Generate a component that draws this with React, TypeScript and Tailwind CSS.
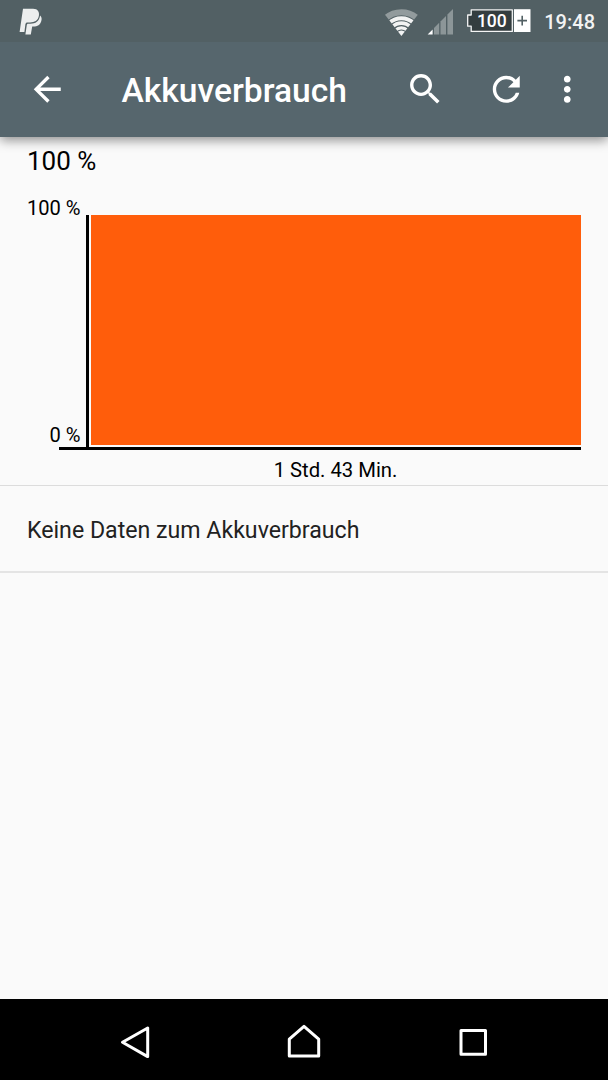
import type { ReactNode } from 'react';

const ActionIcon = ({ label, children }: { label: string; children: ReactNode }) => (
  <button aria-label={label} className="h-[40.5px] w-[40.5px] shrink-0">
    <svg viewBox="0 0 24 24" className="h-full w-full" fill="#fff">
      {children}
    </svg>
  </button>
);

const StatusBar = () => (
  <div className="relative z-10 flex h-[42px] shrink-0 items-center bg-[#526064] pl-[19px] pr-[13px]">
    <svg width="24" height="42" viewBox="19 0 24 42" fill="#eceeee">
      <path d="M23 8.7H33C38 8.7 39.6 12.2 38.9 15.8C38 20.8 34.5 22.4 30 22.4H27.5C26.2 22.4 25.7 23 25.4 24.3L24.4 32H19.6Z" />
      <path d="M40.1 15.5C41.8 17 41.9 19 41.3 21C40.3 24.8 37.5 26.6 33.5 26.6H32.2L30.8 34.5H25.4L26.8 25C27 24 27.5 23.7 28.3 23.7H30.5C35.5 23.7 39.2 21.5 40.1 15.5Z" />
    </svg>
    <div className="ml-auto flex items-center">
      <svg width="34" height="42" viewBox="384 0 34 42">
        <clipPath id="wifi">
          <path d="M401.4 36L384.8 14.6V5H418V14.6Z" />
        </clipPath>
        <g clipPath="url(#wifi)" fill="none" stroke="#f2f3f3">
          <circle cx="401.4" cy="36" r="23.8" stroke="#929b9d" strokeWidth="6" />
          <circle cx="401.4" cy="36" r="17.8" strokeWidth="4" />
          <circle cx="401.4" cy="36" r="12.8" strokeWidth="3.8" />
          <circle cx="401.4" cy="36" r="8.2" strokeWidth="3.2" />
          <circle cx="401.4" cy="36" r="5.6" fill="#f2f3f3" stroke="none" />
        </g>
      </svg>
      <svg width="26" height="42" viewBox="427 0 26 42" className="ml-[9px]" fill="#8c9698">
        <path d="M427.6 34.6L432.6 29.5V34.6Z" fill="#fff" />
        <path d="M434 34.6V28L439.2 22.8V34.6Z" />
        <path d="M440.5 34.6V21.4L446 16V34.6Z" />
        <path d="M447.4 34.6V14.6L453 9V34.6Z" />
      </svg>
      <svg width="65" height="42" viewBox="467 0 65 42" className="ml-[14px]">
        <path
          d="M471.2 9.8H512.3V31.4H471.2V26.2H467.7V15H471.2Z"
          fill="#343d3f"
          stroke="#f4f5f5"
          strokeWidth="1.3"
          strokeLinejoin="round"
        />
        <path d="M514 9.2H530.5V32H514Z" fill="#fff" />
        <path d="M517.4 20.6H527M522.2 15.7V25.5" stroke="#526064" strokeWidth="1.6" />
        <text x="491.8" y="27" textAnchor="middle" className="font-[Roboto,sans-serif] text-[17.5px] font-medium" fill="#fff">
          100
        </text>
      </svg>
      <span className="ml-3 mt-[2px] text-[20px] font-medium leading-none text-[#f2f3f3]">19:48</span>
    </div>
  </div>
);

const Toolbar = () => (
  <header className="relative flex h-[94.5px] shrink-0 items-center bg-[#56666d] pl-[26.5px] pr-[20.5px] shadow-[0_3px_11px_rgba(0,0,0,0.45)]">
    <ActionIcon label="Zurück">
      <path d="M20 11H7.83l5.59-5.59L12 4l-8 8 8 8 1.41-1.41L7.83 13H20v-2z" />
    </ActionIcon>
    <h1 className="ml-[54.5px] mt-1 text-[33.6px] font-medium leading-none text-white">Akkuverbrauch</h1>
    <div className="ml-auto flex items-center">
      <ActionIcon label="Suchen">
        <path d="M15.5 14h-.79l-.28-.27C15.41 12.59 16 11.11 16 9.5 16 5.91 13.09 3 9.5 3S3 5.91 3 9.5 5.91 16 9.5 16c1.61 0 3.09-.59 4.23-1.57l.27.28v.79l5 4.99L20.49 19l-4.99-5zm-6 0C7.01 14 5 11.99 5 9.5S7.01 5 9.5 5 14 7.01 14 9.5 11.99 14 9.5 14z" />
      </ActionIcon>
      <div className="ml-[40.5px] flex">
        <ActionIcon label="Aktualisieren">
          <path d="M17.65 6.35C16.2 4.9 14.21 4 12 4c-4.42 0-7.99 3.58-7.99 8s3.57 8 7.99 8c3.73 0 6.84-2.55 7.73-6h-2.08c-.82 2.33-3.04 4-5.65 4-3.31 0-6-2.69-6-6s2.69-6 6-6c1.66 0 3.14.69 4.22 1.78L13 11h7V4l-2.35 2.35z" />
        </ActionIcon>
      </div>
      <div className="ml-[20.5px] flex">
        <ActionIcon label="Mehr">
          <path d="M12 8c1.1 0 2-.9 2-2s-.9-2-2-2-2 .9-2 2 .9 2 2 2zm0 2c-1.1 0-2 .9-2 2s.9 2 2 2 2-.9 2-2-.9-2-2-2zm0 6c-1.1 0-2 .9-2 2s.9 2 2 2 2-.9 2-2-.9-2-2-2z" />
        </ActionIcon>
      </div>
    </div>
  </header>
);

const BatteryChart = () => (
  <section className="h-[349.5px] border-b border-[#dcdcdc] text-black">
    <p className="pl-[27px] pt-[10.5px] text-[26px] leading-7">100 %</p>
    <div className="mt-10 flex h-[232px] pr-[27px]">
      <div className="flex w-[86px] flex-col justify-between pr-[5.5px] text-right text-[20.1px] leading-6">
        <span className="-mt-[19px]">100 %</span>
        <span>0 %</span>
      </div>
      <div className="flex-1 border-l-[3px] border-black pb-[2px] pl-[2px]">
        <div className="h-full bg-[#ff5d0b]" />
      </div>
    </div>
    <div className="ml-[59px] mr-[27px] h-[3px] bg-black" />
    <p className="pl-[63px] pt-2 text-center text-[20.25px] leading-6">1 Std. 43 Min.</p>
  </section>
);

const NavigationBar = () => (
  <nav className="flex h-[81px] shrink-0 items-center bg-black">
    <svg viewBox="0 0 608 81" className="h-full w-full" fill="none" stroke="#fff" strokeWidth="3" strokeLinejoin="round">
      <path d="M122.5 43.3L147.7 29V57.6Z" />
      <path d="M289.3 57V40.2L304 27.3L318.7 40.2V57Z" />
      <path d="M461 31.5H485.5V55.3H461Z" />
    </svg>
  </nav>
);

const App = () => {
  return (
    <div className="flex h-screen w-full flex-col overflow-hidden bg-[#fafafa] font-[Roboto,sans-serif]">
      <StatusBar />
      <Toolbar />
      <main className="flex-1">
        <BatteryChart />
        <div className="flex h-[87px] items-center border-b-2 border-[#e4e4e4] pl-[27px] pt-[5px] text-[23.15px] text-[#212121]">
          Keine Daten zum Akkuverbrauch
        </div>
      </main>
      <NavigationBar />
    </div>
  );
};

export default App;
